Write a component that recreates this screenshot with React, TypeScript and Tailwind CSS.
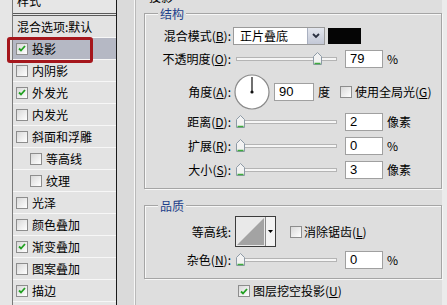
import React from "react";

type Item = { label: string; checked?: boolean; indent?: boolean; active?: boolean; plain?: boolean };

const items: Item[] = [
  { label: "混合选项:默认", plain: true },
  { label: "投影", checked: true, active: true },
  { label: "内阴影" },
  { label: "外发光", checked: true },
  { label: "内发光" },
  { label: "斜面和浮雕" },
  { label: "等高线", indent: true },
  { label: "纹理", indent: true },
  { label: "光泽" },
  { label: "颜色叠加" },
  { label: "渐变叠加", checked: true },
  { label: "图案叠加" },
  { label: "描边", checked: true },
];

const CheckBox = ({ checked }: { checked?: boolean }) => (
  <span className="flex h-[12px] w-[12px] shrink-0 items-center justify-center border border-[#8d8d8d] bg-gradient-to-br from-[#d9d9d9] to-white">
    {checked && (
      <svg width="8" height="7" viewBox="0 0 8 7">
        <path d="M1 3.5 L3 5.5 L7 1" fill="none" stroke="#22a022" strokeWidth="1.8" />
      </svg>
    )}
  </span>
);

const Key = ({ k }: { k: string }) => (
  <>
    (<span className="underline">{k}</span>)
  </>
);

const Label = ({ text, k }: { text: string; k?: string }) => (
  <span className="w-[86px] shrink-0 text-right">
    {text}
    {k && <Key k={k} />}:
  </span>
);

const Slider = ({ value }: { value: number }) => (
  <div className="relative ml-[5px] h-[14px] w-[101px] shrink-0">
    <div className="absolute left-0 right-0 top-[5px] h-[4px] border border-[#b4b4b4] bg-[#f6f6f6]" />
    <svg
      className="absolute top-0"
      style={{ left: Math.round(value * 0.975) }}
      width="9"
      height="13"
      viewBox="0 0 9 13"
    >
      <path d="M0.5 4.5 L4.5 0.5 L8.5 4.5 V12.5 H0.5 Z" fill="#f2f2f2" stroke="#8d9aa6" />
      <path d="M1.5 11.5 H7.5" stroke="#3faa3f" strokeWidth="1.5" />
    </svg>
  </div>
);

const Field = ({ v, className }: { v: string; className: string }) => (
  <div className={`h-[18px] shrink-0 border border-[#a0a0a0] bg-white pl-[4px] font-['Liberation_Sans',sans-serif] text-[13px] leading-[16px] ${className}`}>
    {v}
  </div>
);

const SliderRow = ({ text, k, value, v, unit }: { text: string; k: string; value: number; v: string; unit: string }) => (
  <div className="flex h-[18px] items-center">
    <Label text={text} k={k} />
    <Slider value={value} />
    <Field v={v} className="ml-[8px] w-[38px]" />
    <span className="ml-[4px]">{unit}</span>
  </div>
);

export default function App() {
  return (
    <div className="relative flex h-[305px] w-[447px] overflow-hidden bg-[#dedede] font-['Noto_Sans_CJK_SC',sans-serif] text-[12px] leading-[14px] text-black">
      {/* style list */}
      <div className="w-[117px] shrink-0 bg-[#e6e6e6] pl-[12px]">
        <div className="h-full border-l border-r border-l-[#7a7a7a] border-r-[#1a1a1a]">
          <div className="h-[16px] overflow-hidden border-b-[3px] border-double border-[#5a5a5a] pl-[4px]">
            <div className="-mt-[6px]">样式</div>
          </div>
          {items.map((it) => (
            <div
              key={it.label}
              className={`flex h-[22px] items-center gap-[4px] border-b border-[#f7f7f7] ${
                it.active ? "bg-[#b5b8c4]" : "bg-[#e3e3e3]"
              } ${it.plain ? "pl-[4px]" : it.indent ? "pl-[17px]" : "pl-[3px]"}`}
            >
              {!it.plain && <CheckBox checked={it.checked} />}
              <span>{it.label}</span>
            </div>
          ))}
        </div>
      </div>

      <div className="w-[17px] shrink-0 bg-[#dadada]" />

      {/* drop shadow panel */}
      <div className="relative w-[308px] shrink-0 border-l border-[#f7f7f7] pl-[9px] pt-[13px] shadow-[inset_1px_0_0_#b9b9b9]">
        <span className="absolute -top-[10px] left-[12px] px-[2px]">投影</span>

        <div className="relative border border-[#a5a5a5] pb-[9px] pt-[13px] shadow-[inset_1px_1px_0_#f7f7f7,1px_1px_0_#f7f7f7]">
          <span className="absolute -top-[7px] left-[13px] bg-[#dedede] px-[2px] text-[#1d3f8a]">结构</span>

          <div className="flex h-[18px] items-center">
            <Label text="混合模式" k="B" />
            <div className="ml-[2px] flex h-[18px] w-[92px] shrink-0 border border-[#9a9a9a] bg-white">
              <span className="flex-1 pl-[6px] leading-[16px]">正片叠底</span>
              <span className="flex w-[17px] items-center justify-center border-l border-[#a9b0c0] bg-gradient-to-b from-[#e4e7ee] to-[#c3c8d6]">
                <svg width="8" height="6" viewBox="0 0 8 6">
                  <path d="M1 1 L4 4 L7 1" fill="none" stroke="#2a3040" strokeWidth="1.8" />
                </svg>
              </span>
            </div>
            <div className="ml-[3px] h-[16px] w-[33px] bg-[#050505]" />
          </div>

          <div className="mt-[5px]">
            <SliderRow text="不透明度" k="O" value={79} v="79" unit="%" />
          </div>

          <div className="mt-[6px] flex h-[36px] items-center">
            <Label text="角度" k="A" />
            <svg className="ml-[3px] shrink-0" width="36" height="36" viewBox="0 0 36 36">
              <circle cx="18" cy="18" r="17" fill="#fff" stroke="#8a8a8a" strokeWidth="1.2" />
              <path d="M18 18 V3" stroke="#111" strokeWidth="1.2" />
              <circle cx="18" cy="18" r="1.6" fill="#111" />
            </svg>
            <Field v="90" className="ml-[4px] w-[40px]" />
            <span className="ml-[4px]">度</span>
            <span className="ml-[10px]">
              <CheckBox />
            </span>
            <span className="ml-[3px]">
              使用全局光<Key k="G" />
            </span>
          </div>

          <div className="mt-[3px]">
            <SliderRow text="距离" k="D" value={0} v="2" unit="像素" />
          </div>
          <div className="mt-[6px]">
            <SliderRow text="扩展" k="R" value={0} v="0" unit="%" />
          </div>
          <div className="mt-[6px]">
            <SliderRow text="大小" k="S" value={0} v="3" unit="像素" />
          </div>
        </div>

        <div className="relative mt-[16px] border border-[#a5a5a5] pb-[9px] pt-[10px] shadow-[inset_1px_1px_0_#f7f7f7,1px_1px_0_#f7f7f7]">
          <span className="absolute -top-[7px] left-[13px] bg-[#dedede] px-[2px] text-[#1d3f8a]">品质</span>

          <div className="flex h-[31px] items-center">
            <Label text="等高线" />
            <div className="ml-[4px] flex h-[31px] w-[41px] shrink-0 border border-[#3c3c3c] bg-[#ececec]">
              <svg width="29" height="29" viewBox="0 0 29 29">
                <rect x="0" y="0" width="29" height="29" fill="#e9e9e9" />
                <path d="M1 28 L28 1 V28 Z" fill="#a3a3a3" />
              </svg>
              <span className="flex flex-1 items-center justify-center border-l border-[#8a8a8a] bg-[#f3f3f3]">
                <svg width="5" height="3" viewBox="0 0 5 3">
                  <path d="M0 0 H5 L2.5 3 Z" fill="#000" />
                </svg>
              </span>
            </div>
            <span className="ml-[14px]">
              <CheckBox />
            </span>
            <span className="ml-[2px]">
              消除锯齿<Key k="L" />
            </span>
          </div>

          <div className="mt-[4px]">
            <SliderRow text="杂色" k="N" value={0} v="0" unit="%" />
          </div>
        </div>

        <div className="ml-[94px] mt-[5px] flex h-[14px] items-center gap-[3px]">
          <CheckBox checked />
          <span>
            图层挖空投影<Key k="U" />
          </span>
        </div>
      </div>

      <div className="flex-1 bg-[#ebebeb]" />

      <div className="absolute left-[7px] top-[37px] h-[26px] w-[86px] rounded-[3px] border-[3px] border-[#a5161c]" />
    </div>
  );
}
